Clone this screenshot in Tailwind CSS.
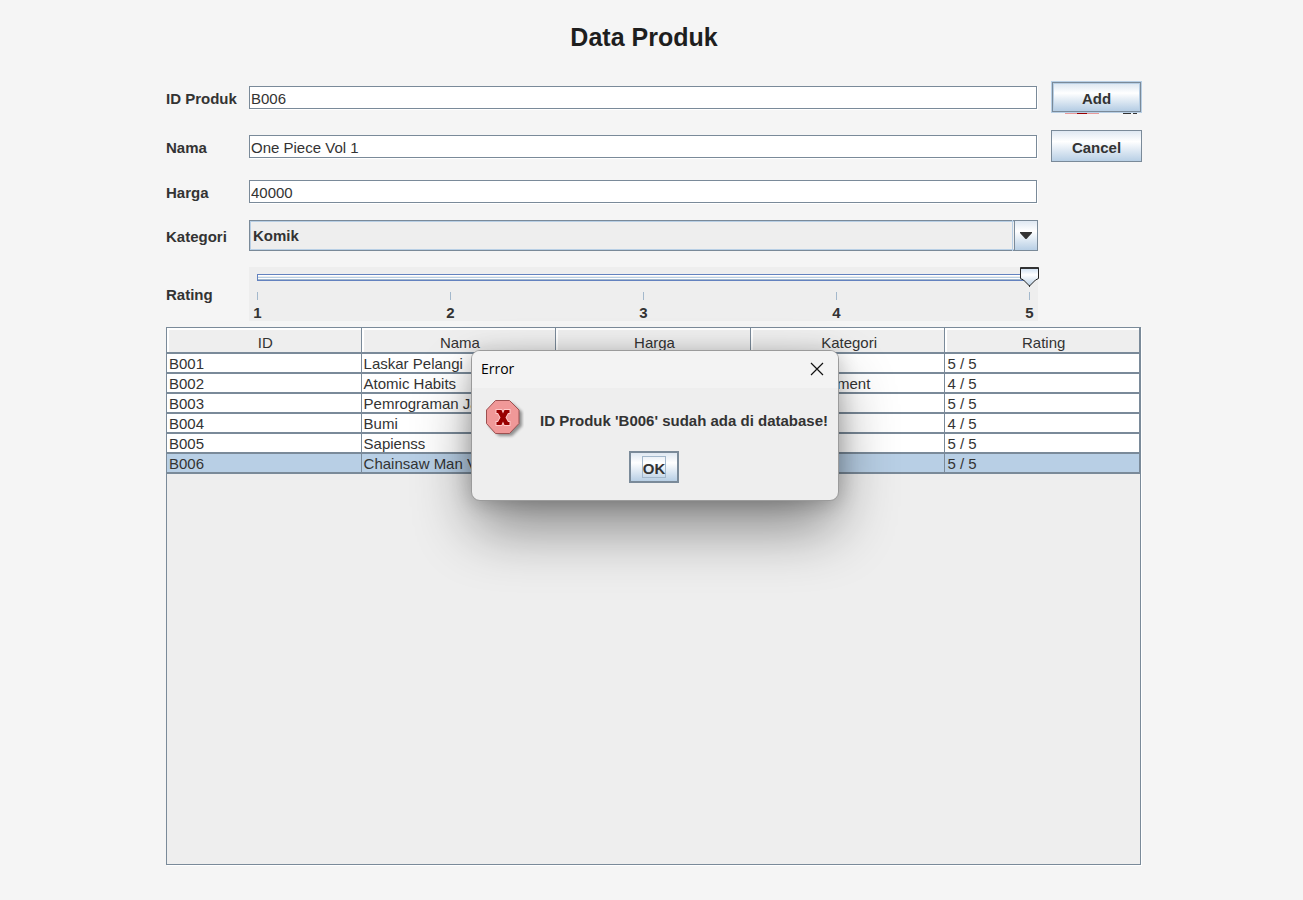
<!DOCTYPE html>
<html lang="id">
<head>
<meta charset="utf-8">
<meta name="viewport" content="width=device-width, initial-scale=1">
<title>Data Produk</title>
<script src="https://cdn.jsdelivr.net/npm/@tailwindcss/browser@4"></script>
</head>
<body class="bg-[#f5f5f5] font-['Liberation_Sans',Arial,sans-serif] text-[15px] leading-5 text-[#333]">
<main class="relative flex min-h-screen flex-col pt-5 pr-[161px] pb-[35px] pl-[166px]">
  <h1 class="pr-5 text-center text-[25px] leading-[34px] font-bold text-[#1e1e1e]">Data Produk</h1>

  <form class="mt-[27px] flex flex-col">
    <div class="flex h-8 items-center">
      <label for="pid" class="w-[83px] shrink-0 pt-1 font-bold">ID Produk</label>
      <input id="pid" type="text" value="B006" class="mr-3.5 h-[23px] min-w-0 flex-1 border border-[#7a8a99] bg-white pt-[3px] pl-px shadow-[1px_1px_0_#fff] outline-none">
      <div class="relative h-8 w-[91px]">
        <button type="button" class="size-full border border-[#b8cfe5] bg-[#7a8a99] p-px">
          <span class="flex size-full items-center justify-center border border-[#b8cfe5] bg-linear-to-b from-[#dfe8f2] via-white via-35% to-[#b8cfe5] pt-1 font-bold">Add</span>
        </button>
        <span class="absolute top-full left-3.5 flex h-px w-[72px]" aria-hidden="true">
          <span class="w-3 bg-[#e89a9a]"></span><span class="w-2.5 bg-[#900]"></span><span class="w-3 bg-[#e89a9a]"></span><span class="w-6"></span><span class="w-2 bg-[#333]"></span><span class="w-0.5"></span><span class="w-1 bg-[#333]"></span>
        </span>
      </div>
    </div>

    <div class="mt-[17px] flex h-8 items-center">
      <label for="nama" class="w-[83px] shrink-0 pt-1 font-bold">Nama</label>
      <input id="nama" type="text" value="One Piece Vol 1" class="mr-3.5 h-[23px] min-w-0 flex-1 border border-[#7a8a99] bg-white pt-[3px] pl-px shadow-[1px_1px_0_#fff] outline-none">
      <button type="button" class="h-8 w-[91px] border border-[#7a8a99] bg-linear-to-b from-[#dfe8f2] via-white via-35% to-[#b8cfe5] pt-1 font-bold">Cancel</button>
    </div>

    <div class="mt-[17px] mr-[105px] flex h-6 items-center">
      <label for="harga" class="w-[83px] shrink-0 pt-1 font-bold">Harga</label>
      <input id="harga" type="text" value="40000" class="h-[23px] min-w-0 flex-1 border border-[#7a8a99] bg-white pt-[3px] pl-px shadow-[1px_1px_0_#fff] outline-none">
    </div>

    <div class="mt-[17px] mr-[104px] flex h-[31px] items-center">
      <label for="kategori" class="w-[83px] shrink-0 pt-0.5 font-bold">Kategori</label>
      <div class="relative h-full flex-1">
        <select id="kategori" class="size-full appearance-none border border-[#7a8a99] bg-[#eee] pt-px pl-[3px] font-bold shadow-[inset_0_0_0_1px_#b8cfe5] outline-none">
          <option>Komik</option>
        </select>
        <span class="pointer-events-none absolute inset-y-0 right-0 flex w-[26px] border-l border-[#b8cfe5] pl-px">
          <span class="flex w-full items-center justify-center border border-[#7a8a99] bg-linear-to-b from-[#dfe8f2] via-white via-35% to-[#b8cfe5]">
            <svg class="h-[7px] w-3" viewBox="0 0 12 7" fill="#333" aria-hidden="true"><path d="M0 0h12v1L6.500 7h-1L0 1z"/></svg>
          </span>
        </span>
      </div>
    </div>

    <div class="mt-4 mr-[104px] flex h-[54px] items-center">
      <label for="rating" class="w-[83px] shrink-0 pt-0.5 font-bold">Rating</label>
      <div class="relative h-full flex-1 bg-[#eee] px-2 pt-[7px]">
        <div class="relative flex h-[7px] flex-col border border-[#6382bf]">
          <span class="h-px bg-white"></span><span class="h-px bg-[#eee]"></span><span class="h-px bg-[#b8cfe5]"></span><span class="h-px bg-white"></span><span class="h-px bg-[#a3b8cc]"></span>
          <svg class="absolute -top-[9px] -right-[10px] h-[22px] w-[19px]" viewBox="0 0 19 22" aria-hidden="true">
            <defs><linearGradient id="thumb" x1="0" y1="0" x2="0" y2="1"><stop offset="0" stop-color="#c8dcf0"/><stop offset=".4" stop-color="#fff"/><stop offset="1" stop-color="#b8cfe5"/></linearGradient></defs>
            <path d="M.5 1.500h18v11L15.500 14l-6 6-6-6L.5 12.500z" fill="url(#thumb)" stroke="#222"/>
            <path d="M1 2h17" stroke="#333" stroke-width="2"/>
            <path d="M9.500 19v2" stroke="#333"/>
          </svg>
        </div>
        <div class="mt-[11px] flex justify-between" aria-hidden="true">
          <span class="h-2 w-px bg-[#a3b8cc]"></span><span class="h-2 w-px bg-[#a3b8cc]"></span><span class="h-2 w-px bg-[#a3b8cc]"></span><span class="h-2 w-px bg-[#a3b8cc]"></span><span class="h-2 w-px bg-[#a3b8cc]"></span>
        </div>
        <div class="-mx-1 mt-[3px] flex justify-between font-bold">
          <span class="w-[9px] text-center">1</span><span class="w-[9px] text-center">2</span><span class="w-[9px] text-center">3</span><span class="w-[9px] text-center">4</span><span class="w-[9px] text-center">5</span>
        </div>
        <input id="rating" type="range" min="1" max="5" value="5" class="absolute inset-x-0 top-0 h-6 w-full opacity-0">
      </div>
    </div>
  </form>

  <section class="mt-1.5 mr-px flex-1 border border-[#7a8a99] bg-[#eee] shadow-[1px_1px_0_#fff]">
    <table class="w-full table-fixed border-separate border-spacing-0 text-left [&_td]:h-5 [&_td]:overflow-hidden [&_td]:border-r [&_td]:border-b-2 [&_td]:border-[#7a8a99] [&_td]:pt-0.5 [&_td]:pl-0.5 [&_td]:leading-4 [&_td]:whitespace-nowrap [&_th]:h-[26px] [&_th]:border-r [&_th]:border-b-2 [&_th]:border-[#7a8a99] [&_th]:pt-1.5 [&_th]:pl-[3px] [&_th]:text-center [&_th]:leading-[18px] [&_th]:font-normal [&_th]:shadow-[inset_2px_2px_0_#fff]">
      <thead><tr><th>ID</th><th>Nama</th><th>Harga</th><th>Kategori</th><th>Rating</th></tr></thead>
      <tbody class="bg-white">
        <tr><td>B001</td><td>Laskar Pelangi</td><td></td><td></td><td>5 / 5</td></tr>
        <tr><td>B002</td><td>Atomic Habits</td><td></td><td>Self Improvement</td><td>4 / 5</td></tr>
        <tr><td>B003</td><td>Pemrograman Java</td><td></td><td></td><td>5 / 5</td></tr>
        <tr><td>B004</td><td>Bumi</td><td></td><td></td><td>4 / 5</td></tr>
        <tr><td>B005</td><td>Sapienss</td><td></td><td></td><td>5 / 5</td></tr>
        <tr class="bg-[#b8cfe5]"><td>B006</td><td>Chainsaw Man Vol 1</td><td>40000</td><td>Komik</td><td>5 / 5</td></tr>
      </tbody>
    </table>
  </section>

  <div class="absolute top-[350px] right-[161px] left-[166px] flex justify-center pl-0.5">
    <div role="alertdialog" aria-labelledby="dlg-title" aria-describedby="dlg-text" class="overflow-hidden rounded-[9px] border border-[#9b9b9b] bg-[#eee] shadow-[0_30px_60px_-4px_rgba(0,0,0,0.45),0_2px_20px_rgba(0,0,0,0.2)]">
      <div class="flex h-[37px] items-center justify-between bg-[#f3f3f3] pr-3.5 pb-px pl-[9px]">
        <h2 id="dlg-title" class="font-['Open_Sans',sans-serif] text-sm text-black">Error</h2>
        <button type="button" aria-label="Close" class="flex size-3.5 items-center justify-center">
          <svg class="size-3.5" viewBox="0 0 14 14" fill="none" stroke="#111" stroke-width="1.200" aria-hidden="true"><path d="M1 1l12 12M13 1L1 13"/></svg>
        </button>
      </div>
      <div class="flex items-start pt-3 pr-2.5 pl-3.5">
        <svg class="h-10 w-[38px]" viewBox="0 0 38 40" aria-hidden="true">
          <defs><filter id="soft" x="-20%" y="-20%" width="140%" height="140%"><feGaussianBlur stdDeviation="1.500"/></filter></defs>
          <path d="M13 3h13l10 9v14l-10 10H13L3 26V12z" fill="#000" opacity=".4" filter="url(#soft)"/>
          <path d="M9.500.5h14l9.500 9.500v13.500L23.500 33.500h-14L.5 23.500V10z" fill="#f09898" stroke="#9c5050"/>
          <path d="M9.500 9h6.500l1 2 1-2h6.500v5H22.500L20.500 17.500l2 3.500h2v5H18l-1-2-1 2H9.500v-5h2l2-3.500-2-3.500h-2z" fill="#ffc9c9"/>
          <path d="M10.500 10h5l1.500 3.500 1.500-3.500h5v3h-1.500l-2.500 4.500 2.500 4.500h1.500v3h-5L17 21.500 15.500 25h-5v-3H12l2.500-4.500L12 13h-1.500z" fill="#900"/>
        </svg>
        <p id="dlg-text" class="pt-[11px] pl-4 leading-5 font-bold">ID Produk 'B006' sudah ada di database!</p>
      </div>
      <div class="flex justify-center pt-[11px] pr-0.5 pb-[17px]">
        <button type="button" class="h-8 w-[50px] border-2 border-[#7a8a99] bg-linear-to-b from-[#dfe8f2] via-white via-35% to-[#b8cfe5]">
          <span class="mx-auto flex h-[22px] w-6 items-center justify-center border border-[#a3b8cc] pt-[3px] font-bold">OK</span>
        </button>
      </div>
    </div>
  </div>
</main>
</body>
</html>
